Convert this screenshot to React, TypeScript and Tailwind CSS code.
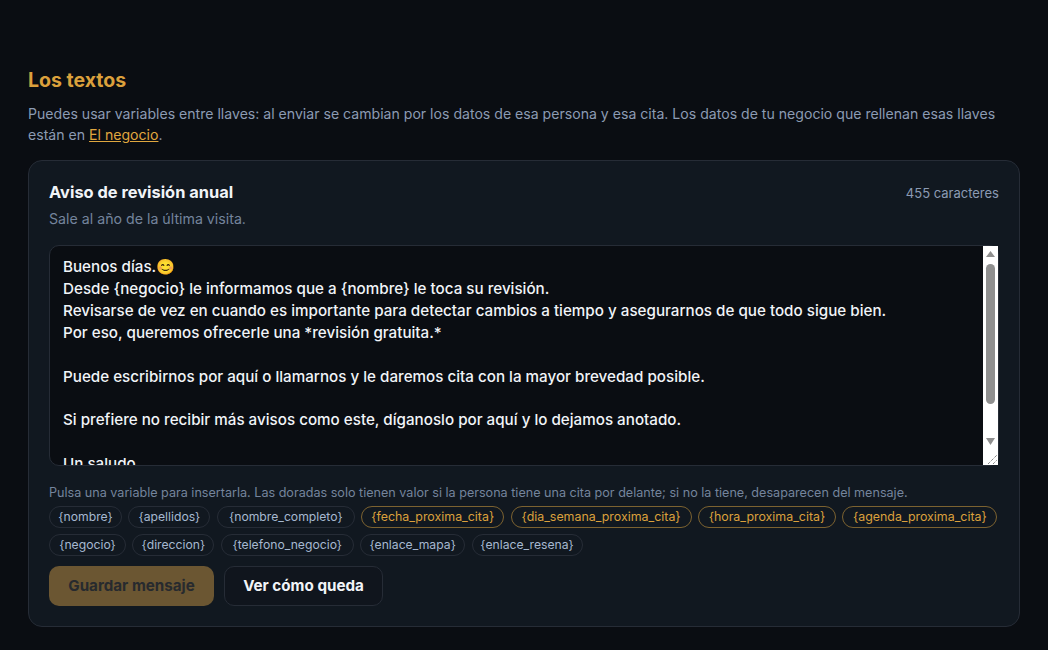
const rows = [
  [
    { t: "{nombre}", w: "w-[73px]", gold: false },
    { t: "{apellidos}", w: "w-[82px]", gold: false },
    { t: "{nombre_completo}", w: "w-[138px]", gold: false },
    { t: "{fecha_proxima_cita}", w: "w-[143px]", gold: true },
    { t: "{dia_semana_proxima_cita}", w: "w-[181px]", gold: true },
    { t: "{hora_proxima_cita}", w: "w-[138px]", gold: true },
    { t: "{agenda_proxima_cita}", w: "w-[155px]", gold: true },
  ],
  [
    { t: "{negocio}", w: "w-[77px]", gold: false },
    { t: "{direccion}", w: "w-[82px]", gold: false },
    { t: "{telefono_negocio}", w: "w-[133px]", gold: false },
    { t: "{enlace_mapa}", w: "w-[105px]", gold: false },
    { t: "{enlace_resena}", w: "w-[111px]", gold: false },
  ],
];

const msg = `Buenos días.😊
Desde {negocio} le informamos que a {nombre} le toca su revisión.
Revisarse de vez en cuando es importante para detectar cambios a tiempo y asegurarnos de que todo sigue bien.
Por eso, queremos ofrecerle una *revisión gratuita.*

Puede escribirnos por aquí o llamarnos y le daremos cita con la mayor brevedad posible.

Si prefiere no recibir más avisos como este, díganoslo por aquí y lo dejamos anotado.

Un saludo.`;

export default function App() {
  return (
    <div className="min-h-[650px] bg-[#0a0d12] px-7 pt-[68px] font-['Inter',sans-serif]">
      <h2 className="text-[19.5px] leading-[24px] font-bold text-[#dba03c]">Los textos</h2>
      <p className="mt-[11px] text-[14.1px] leading-[21px] text-[#8c9bb3]">
        Puedes usar variables entre llaves: al enviar se cambian por los datos de esa persona y esa cita. Los datos de tu negocio que rellenan esas llaves están en <a className="text-[#e0a73f] underline">El negocio</a>.
      </p>
      <section className="mt-[15px] rounded-[14px] border border-[#262c36] bg-[#111820] px-5 pt-[19px] pb-5">
        <div className="flex items-baseline justify-between">
          <h3 className="text-[16.4px] leading-[24px] font-bold text-[#f1f4f8]">Aviso de revisión anual</h3>
          <span className="text-[13px] text-[#8c9bb3]">455 caracteres</span>
        </div>
        <p className="mt-[5px] text-[14.2px] leading-[20px] text-[#74849c]">Sale al año de la última visita.</p>
        <div className="relative mt-4 h-[221px]">
          <textarea
            readOnly
            defaultValue={msg}
            className="block h-full w-full resize-none overflow-hidden rounded-[10px] border border-[#262c36] bg-[#0a0d12] px-[13px] py-[10px] text-[15.2px] leading-[21.9px] font-medium text-[#f1f4f8] outline-none font-['Inter',sans-serif]"
          />
          <div className="absolute top-px right-px bottom-px flex w-[15px] flex-col items-center bg-white">
            <svg width="15" height="18" viewBox="0 0 15 18" className="shrink-0"><path d="M7.5 5L12 11H3z" fill="#8f8f8f" /></svg>
            <div className="h-[140px] w-[9px] shrink-0 rounded-full bg-[#8f8f8f]" />
            <svg width="15" height="18" viewBox="0 0 15 18" className="mt-[29px] shrink-0"><path d="M3 5h9l-4.5 7z" fill="#8f8f8f" /></svg>
            <svg width="15" height="15" viewBox="0 0 15 15" className="absolute right-0 bottom-0"><path d="M5 14L14 5M10 14l4-4" stroke="#555" strokeWidth="1" strokeDasharray="1 1" /></svg>
          </div>
        </div>
        <p className="mt-[18px] text-[12.6px] leading-[18px] text-[#74849c]">Pulsa una variable para insertarla. Las doradas solo tienen valor si la persona tiene una cita por delante; si no la tiene, desaparecen del mensaje.</p>
        <div className="mt-[4px] flex flex-col gap-[6px]">
          {rows.map((row, i) => (
            <div key={i} className="flex gap-[6.4px]">
              {row.map((c) => (
                <span
                  key={c.t}
                  className={
                    c.gold
                      ? `${c.w} flex h-[22px] items-center justify-center rounded-full border border-[#7c6230] text-[12.4px] whitespace-nowrap text-[#dba03c]`
                      : `${c.w} flex h-[22px] items-center justify-center rounded-full border border-[#262c36] text-[12.2px] whitespace-nowrap text-[#a6b8d0]`
                  }
                >
                  {c.t}
                </span>
              ))}
            </div>
          ))}
        </div>
        <div className="mt-[10px] flex gap-[10px]">
          <button className="h-10 w-[165px] rounded-[10px] bg-[#6b5632] text-[15.2px] font-bold text-[#272a2e]">Guardar mensaje</button>
          <button className="h-10 w-[159px] rounded-[10px] border border-[#262c36] bg-[#10151d] text-[15.2px] font-bold text-[#f1f4f8]">Ver cómo queda</button>
        </div>
      </section>
    </div>
  );
}
